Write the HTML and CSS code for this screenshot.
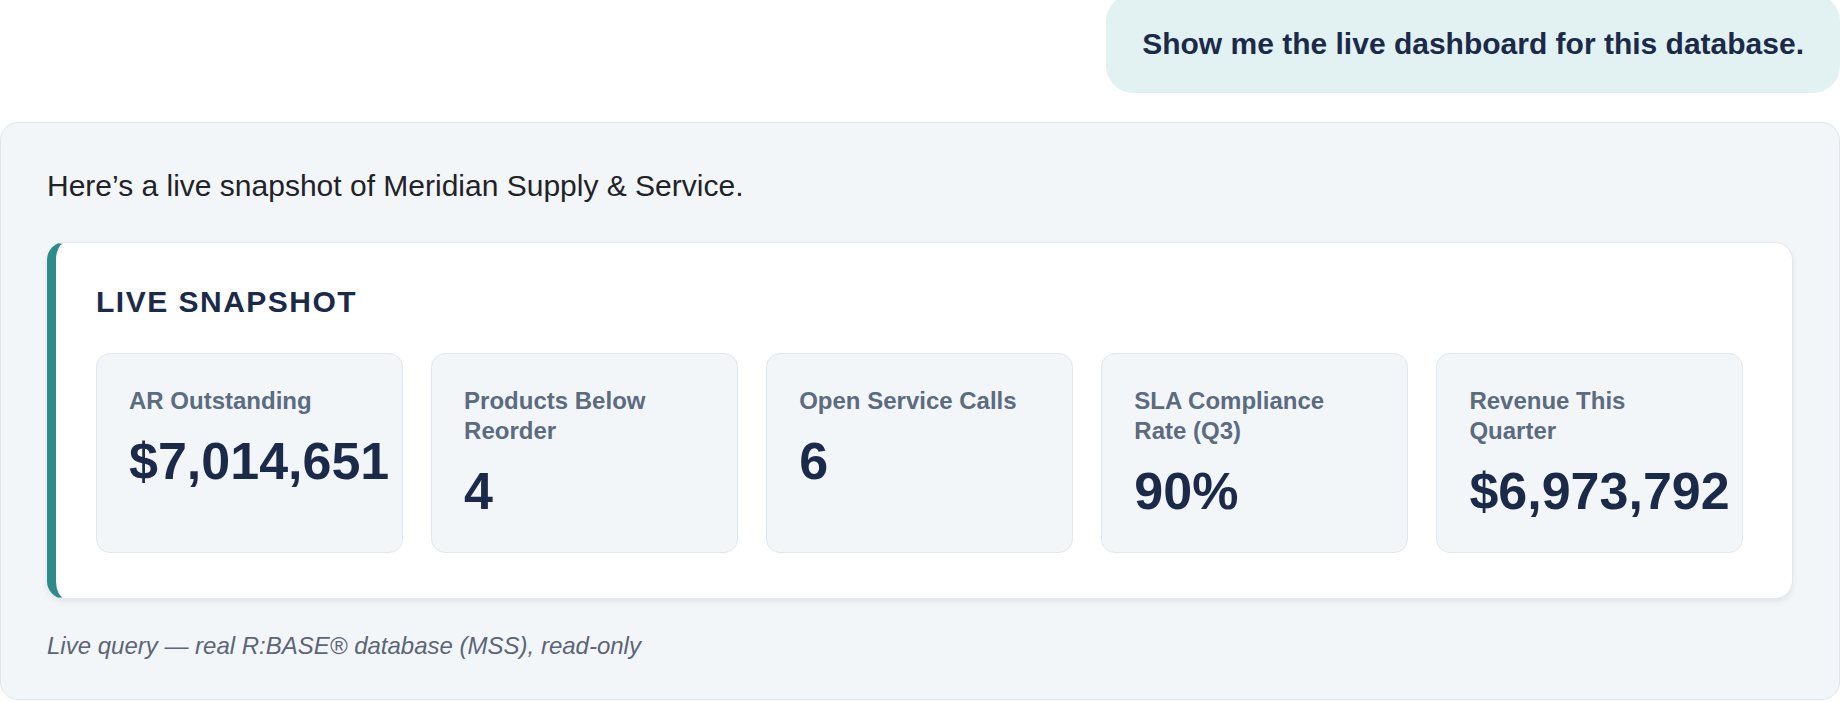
FILE: index.html
```html
<!DOCTYPE html>
<html lang="en">
<head>
<meta charset="utf-8">
<title>Live snapshot</title>
<link rel="stylesheet" href="styles.css">
</head>
<body>
<div class="chat">
  <div class="user-row">
    <div class="bubble">Show me the live dashboard for this database.</div>
  </div>
  <div class="panel">
    <p class="intro">Here’s a live snapshot of Meridian Supply &amp; Service.</p>
    <section class="card">
      <h2 class="card-title">Live snapshot</h2>
      <div class="metrics">
        <div class="tile">
          <div class="tile-label">AR Outstanding</div>
          <div class="tile-value">$7,014,651</div>
        </div>
        <div class="tile">
          <div class="tile-label">Products Below Reorder</div>
          <div class="tile-value">4</div>
        </div>
        <div class="tile">
          <div class="tile-label">Open Service Calls</div>
          <div class="tile-value">6</div>
        </div>
        <div class="tile">
          <div class="tile-label">SLA Compliance Rate (Q3)</div>
          <div class="tile-value">90%</div>
        </div>
        <div class="tile">
          <div class="tile-label">Revenue This Quarter</div>
          <div class="tile-value">$6,973,792</div>
        </div>
      </div>
    </section>
    <p class="note">Live query — real R:BASE® database (MSS), read-only</p>
  </div>
</div>
</body>
</html>
```

FILE: styles.css
```css
* {
  box-sizing: border-box;
}

html, body {
  margin: 0;
  padding: 0;
  background: #ffffff;
}

body {
  font-family: "Liberation Sans", Arial, sans-serif;
  color: #1f2328;
  overflow: hidden;
}

.chat {
  width: 1840px;
}

.user-row {
  display: flex;
  justify-content: flex-end;
  margin-top: -6px;
}

.bubble {
  background: #e2f2f3;
  color: #1c2a4a;
  font-weight: 700;
  font-size: 30px;
  line-height: 45px;
  padding: 27px 36px;
  border-radius: 27px;
  white-space: nowrap;
}

.panel {
  margin-top: 29px;
  background: #f3f6f9;
  border: 1px solid #dfe5ec;
  border-radius: 18px;
  padding: 40px 46px 35px;
}

.intro {
  margin: 0 0 34px;
  font-size: 30px;
  line-height: 45px;
  color: #1f2328;
}

.card {
  background: #ffffff;
  border: 1px solid #e3e8ef;
  border-left: 9px solid #2e8b89;
  border-radius: 18px;
  padding: 41px 49px 45px 40px;
  box-shadow: 0 3px 6px rgba(15, 23, 42, 0.08);
}

.card-title {
  margin: 0 0 33px;
  font-size: 30px;
  line-height: 36px;
  font-weight: 700;
  letter-spacing: 1.5px;
  text-transform: uppercase;
  color: #1c2a4a;
}

.metrics {
  display: grid;
  grid-template-columns: repeat(5, minmax(0, 1fr));
  column-gap: 28.5px;
}

.tile {
  background: #f3f6f9;
  border: 1px solid #e1e7ee;
  border-radius: 14px;
  padding: 32px;
}

.tile-label {
  font-size: 24px;
  line-height: 30px;
  font-weight: 700;
  color: #5b6b80;
}

.tile-value {
  margin-top: 17px;
  font-size: 52px;
  line-height: 1.1;
  font-weight: 700;
  color: #1c2a4a;
  white-space: nowrap;
}

.note {
  margin: 29px 0 0;
  font-size: 24px;
  line-height: 36px;
  font-style: italic;
  color: #5b6577;
}
```
